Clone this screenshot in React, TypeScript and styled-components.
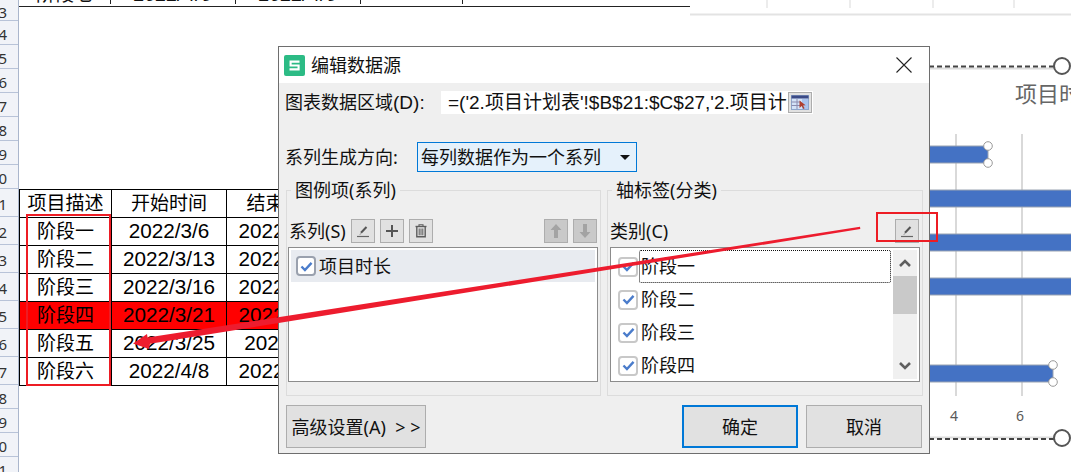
import React from "react";
import styled, { createGlobalStyle } from "styled-components";

const Global = createGlobalStyle`
  html, body { margin: 0; padding: 0; background: #fff; }
  body { font-family: "Noto Sans", "Noto Sans CJK SC", sans-serif; color: #111; }
`;

const Page = styled.div`
  position: relative;
  width: 1071px;
  height: 472px;
  overflow: hidden;
  display: flex;
  background: #fff;
`;

const RowHeaders = styled.div`
  flex: 0 0 19px;
  width: 19px;
  min-width: 0;
  overflow: hidden;
  box-sizing: border-box;
  background: #f1f3f8;
  border-right: 1px solid #aab6cc;
  display: flex;
  flex-direction: column;
`;

const RowHead = styled.div<{ $h: number }>`
  flex: 0 0 ${(p) => p.$h}px;
  box-sizing: border-box;
  border-bottom: 1px solid #b8c3d8;
  overflow: hidden;
  white-space: nowrap;
  text-indent: -10px;
  line-height: ${(p) => p.$h + 3}px;
  font-size: 15px;
  color: #333;
`;

const Sheet = styled.div`
  flex: 1;
  min-width: 0;
  display: flex;
  flex-direction: column;
`;

const TopRow = styled.div`
  display: flex;
  width: 671px;
  height: 7px;
  box-sizing: border-box;
  border-bottom: 1px solid #222;
  overflow: hidden;
`;

const TopCell = styled.div<{ $w: number }>`
  flex: 0 0 ${(p) => p.$w}px;
  box-sizing: border-box;
  height: 6px;
  border-right: 1px solid #222;
  display: flex;
  justify-content: center;
  align-items: flex-end;
  font-size: 19px;
  line-height: 20px;
  margin-top: -2px;
`;

const Table = styled.table`
  margin-top: 182px;
  border-collapse: collapse;
  table-layout: fixed;
  width: 323px;
  font-family: "Noto Sans CJK SC", sans-serif;
  font-size: 19px;
  color: #000;
`;

const Tr = styled.tr<{ $red?: boolean }>`
  height: 28px;
  background: ${(p) => (p.$red ? "#ff0000" : "#fff")};
`;

const Td = styled.td<{ $w?: number; $date?: boolean }>`
  ${(p) => (p.$w ? `width: ${p.$w}px;` : "")}
  ${(p) => (p.$date ? `font-family: "Liberation Sans", sans-serif; font-size: 20.7px;` : "")}
  box-sizing: border-box;
  border: 1px solid #000;
  padding: 0 0 ${(p) => (p.$date ? 1 : 3)}px;
  height: 28px;
  line-height: 24px;
  text-align: center;
  white-space: nowrap;
  overflow: hidden;
`;

const ChartSvg = styled.svg`
  position: absolute;
  left: 690px;
  top: 0;
`;

const Dialog = styled.div`
  position: absolute;
  left: 278px;
  top: 46px;
  width: 652px;
  height: 408px;
  box-sizing: border-box;
  border: 1px solid #6e6e6e;
  background: #efefef;
  font-size: 18px;
  line-height: 24px;
  color: #111;
  display: flex;
  flex-direction: column;
`;

const TitleBar = styled.div`
  flex: 0 0 36px;
  background: #fff;
  display: flex;
  align-items: center;
  padding: 0 17px 0 5px;
`;

const TitleText = styled.div`
  margin-left: 6px;
  flex: 1;
`;

const Body = styled.div`
  flex: 1;
  display: flex;
  flex-direction: column;
  padding: 7px 6px 0 7px;
`;

const FieldRow = styled.div<{ $top?: number }>`
  display: flex;
  align-items: center;
  margin-top: ${(p) => p.$top ?? 0}px;
  margin-left: -1px;
`;

const FieldLabel = styled.div<{ $w: number }>`
  flex: 0 0 ${(p) => p.$w}px;
  white-space: nowrap;
`;

const RangeInput = styled.div`
  width: 372px;
  height: 23px;
  background: #fff;
  display: flex;
  align-items: center;
`;

const RangeText = styled.div`
  width: 339px;
  padding-left: 7px;
  overflow: hidden;
  white-space: nowrap;
  font-size: 19px;
`;

const Latin = styled.span`
  font-family: "Liberation Sans", sans-serif;
  font-size: 19px;
`;

const RangeBtn = styled.div`
  width: 24px;
  height: 21px;
  margin-left: 1px;
  box-sizing: border-box;
  border: 1px solid #adadad;
  background: #e1e1e1;
  display: flex;
  align-items: center;
  justify-content: center;
`;

const Select = styled.div`
  width: 220px;
  height: 30px;
  box-sizing: border-box;
  border: 1px solid #0078d7;
  background: #e5f1fb;
  display: flex;
  align-items: center;
  justify-content: space-between;
  padding: 0 6px 0 3px;
`;

const Caret = styled.div`
  width: 0;
  height: 0;
  border-left: 5px solid transparent;
  border-right: 5px solid transparent;
  border-top: 5px solid #111;
`;

const Groups = styled.div`
  display: flex;
  gap: 6px;
  margin-top: 18px;
  height: 206px;
`;

const Group = styled.div<{ $w: number; $left: number }>`
  position: relative;
  box-sizing: border-box;
  width: ${(p) => p.$w}px;
  border: 1px solid #dcdcdc;
  padding: 28px 2px 0 ${(p) => p.$left}px;
`;

const Legend = styled.div`
  position: absolute;
  top: -13px;
  left: 4px;
  padding: 0 4px;
  background: #efefef;
`;

const Toolbar = styled.div<{ $pad: number }>`
  display: flex;
  align-items: center;
  gap: 5px;
  height: 24px;
  padding-left: ${(p) => p.$pad}px;
  padding-right: 1px;
`;

const ToolLabel = styled.div`
  flex: 0 0 56px;
  white-space: nowrap;
`;

const Spacer = styled.div`
  flex: 1;
`;

const ToolBtn = styled.div<{ $off?: boolean }>`
  flex: 0 0 24px;
  height: 24px;
  box-sizing: border-box;
  border: 1px solid #adadad;
  background: ${(p) => (p.$off ? "#c9c9c9" : "#e1e1e1")};
  display: flex;
  align-items: center;
  justify-content: center;
`;

const ListBox = styled.div`
  margin-top: 4px;
  width: 310px;
  height: 135px;
  box-sizing: border-box;
  border: 1px solid #8c8c8c;
  background: #fff;
  padding: 2px;
  display: flex;
  overflow: hidden;
`;

const Items = styled.div`
  flex: 1;
  min-width: 0;
`;

const Item = styled.div<{ $selected?: boolean }>`
  height: ${(p) => (p.$selected ? 32 : 33)}px;
  display: flex;
  align-items: center;
  padding-left: 5px;
  gap: 3px;
  background: ${(p) => (p.$selected ? "#e8ebf0" : "#fff")};
`;

const Box = styled.div<{ $dark?: boolean }>`
  flex: 0 0 20px;
  height: 20px;
  box-sizing: border-box;
  border: 2px solid ${(p) => (p.$dark ? "#9aa1ae" : "#c8c8c8")};
  border-radius: 4px;
  background: #fff;
  display: flex;
  align-items: center;
  justify-content: center;
`;

const ItemLabel = styled.div<{ $focus?: boolean }>`
  flex: 1;
  height: 33px;
  box-sizing: border-box;
  margin-left: -2px;
  padding-left: 1px;
  margin-right: 2px;
  line-height: 31px;
  border: 1px ${(p) => (p.$focus ? "dotted #111" : "solid transparent")};
  border-radius: 2px;
`;

const Scroll = styled.div`
  flex: 0 0 24px;
  background: #f0f0f0;
  display: flex;
  flex-direction: column;
  align-items: center;
`;

const ScrollEnd = styled.div`
  flex: 0 0 26px;
  width: 100%;
  display: flex;
  align-items: center;
  justify-content: center;
`;

const Thumb = styled.div`
  flex: 0 0 38px;
  width: 100%;
  background: #c9c9c9;
`;

const ScrollGap = styled.div`
  flex: 1;
`;

const Footer = styled.div`
  display: flex;
  align-items: center;
  margin: 9px 1px 0 0;
  gap: 8px;
`;

const Action = styled.div<{ $w: number; $primary?: boolean }>`
  width: ${(p) => p.$w}px;
  height: 43px;
  box-sizing: border-box;
  border: ${(p) => (p.$primary ? "2px solid #0078d7" : "1px solid #adadad")};
  background: #e1e1e1;
  display: flex;
  align-items: center;
  justify-content: center;
  white-space: pre;
`;

const Mark = styled.div<{ $x: number; $y: number; $w: number; $h: number }>`
  position: absolute;
  left: ${(p) => p.$x}px;
  top: ${(p) => p.$y}px;
  width: ${(p) => p.$w}px;
  height: ${(p) => p.$h}px;
  box-sizing: border-box;
  border: 2px solid #ed1c24;
`;

const ArrowSvg = styled.svg`
  position: absolute;
  left: 0;
  top: 0;
  pointer-events: none;
`;

const Pencil = () => (
  <svg width="18" height="18" viewBox="0 0 18 18">
    <path d="M7 10.8 L12.5 5" stroke="#555" strokeWidth="2" fill="none" />
    <path d="M6.4 11.4 L5.2 12.8 L7.2 12Z" fill="#555" />
    <path d="M3 14.5 H15" stroke="#666" strokeWidth="1.2" />
  </svg>
);

const Plus = () => (
  <svg width="16" height="16" viewBox="0 0 16 16">
    <path d="M8 2 V14 M2 8 H14" stroke="#555" strokeWidth="2" />
  </svg>
);

const Trash = () => (
  <svg width="16" height="16" viewBox="0 0 16 16" fill="none" stroke="#5c5c5c">
    <path d="M2.5 3.5 H13.5" strokeWidth="1.4" />
    <path d="M6 3 V1.7 H10 V3" strokeWidth="1.1" />
    <path d="M3.8 4 V13.8 H12.2 V4" strokeWidth="1.4" />
    <path d="M6.2 5.5 V12.3 M8 5.5 V12.3 M9.8 5.5 V12.3" strokeWidth="1" />
  </svg>
);

const Vert = ({ down }: { down?: boolean }) => (
  <svg width="14" height="16" viewBox="0 0 14 16" fill="#a3a3a3" style={down ? { transform: "rotate(180deg)" } : undefined}>
    <path d="M7 1 L12.5 7 H9 V15 H5 V7 H1.5Z" />
  </svg>
);

const Chev = ({ down }: { down?: boolean }) => (
  <svg width="14" height="10" viewBox="0 0 14 10" style={down ? { transform: "rotate(180deg)" } : undefined}>
    <path d="M2 8 L7 3 L12 8" fill="none" stroke="#5f5f5f" strokeWidth="2.6" />
  </svg>
);

const Check = () => (
  <svg width="13" height="11" viewBox="0 0 14 12">
    <path d="M1.5 6 L5.3 9.8 L12.5 2" fill="none" stroke="#4a7ccb" strokeWidth="2.6" />
  </svg>
);

const CloseX = () => (
  <svg width="16" height="16" viewBox="0 0 16 16">
    <path d="M0.5 0.5 L15.5 15.5 M15.5 0.5 L0.5 15.5" stroke="#222" strokeWidth="1.1" />
  </svg>
);

const SLogo = () => (
  <svg width="21" height="21" viewBox="0 0 21 21">
    <rect width="21" height="21" rx="2" fill="#2cbb85" />
    <path d="M15.5 6.6 H6.6 V10.5 H14.6 V14.4 H5.5" fill="none" stroke="#fff" strokeWidth="2.1" />
  </svg>
);

const RangeIcon = () => (
  <svg width="18" height="15" viewBox="0 0 18 15">
    <rect x="0.5" y="0.5" width="17" height="14" fill="#d4e3f8" stroke="#8ea6cc" />
    <rect x="0.5" y="0.5" width="17" height="3" fill="#3b4a86" />
    <path d="M0.5 7 H10 M0.5 10.5 H10 M6 4 V14" stroke="#8c8cb0" />
    <rect x="11" y="4" width="6" height="10" fill="#a9c4ee" />
    <path d="M8.5 5.5 L8.5 13 L10.7 11 L12.3 14 L13.6 13.3 L12 10.5 L14.6 10.2Z" fill="#b0402f" />
  </svg>
);

const rowHeights = [21, 24, 24, 24, 24, 24, 24, 24, 28, 28, 28, 28, 28, 28, 28, 24, 24, 24, 24];
const rows: [string, string, string, boolean?][] = [
  ["阶段一", "2022/3/6", "2022/3/12"],
  ["阶段二", "2022/3/13", "2022/3/15"],
  ["阶段三", "2022/3/16", "2022/3/20"],
  ["阶段四", "2022/3/21", "2022/3/24", true],
  ["阶段五", "2022/3/25", "2022/4/7"],
  ["阶段六", "2022/4/8", "2022/4/15"],
];

const Bar = ({ y, x2 }: { y: number; x2: number }) => (
  <rect x={900} y={y} width={x2 - 900} height={17} fill="#4472c4" stroke="#9aa3b2" strokeWidth="1" />
);

const Handle = ({ x, y }: { x: number; y: number }) => (
  <circle cx={x} cy={y} r={4.3} fill="#fff" stroke="#9a9a9a" strokeWidth="1" />
);

export default function App() {
  return (
    <Page>
      <Global />
      <RowHeaders>
        {rowHeights.map((h, i) => (
          <RowHead key={i} $h={h}>{13 + i}</RowHead>
        ))}
      </RowHeaders>
      <Sheet>
        <TopRow>
          <TopCell $w={92}>阶段七</TopCell>
          <TopCell $w={125}>2022/4/9</TopCell>
          <TopCell $w={125}>2022/4/9</TopCell>
          <TopCell $w={102} />
          <TopCell $w={228} />
        </TopRow>
        <Table>
          <tbody>
            <Tr>
              <Td $w={92}>项目描述</Td>
              <Td $w={115}>开始时间</Td>
              <Td $w={116}>结束时间</Td>
            </Tr>
            {rows.map(([a, b, c, red]) => (
              <Tr key={a} $red={red}>
                <Td>{a}</Td>
                <Td $date>{b}</Td>
                <Td $date>{c}</Td>
              </Tr>
            ))}
          </tbody>
        </Table>
      </Sheet>

      <ChartSvg width="381" height="472" viewBox="690 0 381 472">
        <path d="M690 14.5 H1071" stroke="#e3e3e3" strokeWidth="2" />
        <path d="M767 0 V8 M850 0 V8 M933 0 V8 M1014 0 V8" stroke="#e6e6e6" strokeWidth="1.5" />
        <path d="M929 68.5 H1054" stroke="#dcdcdc" strokeWidth="2" />
        <path d="M929 66.5 H1054" stroke="#444" strokeWidth="2" strokeDasharray="5 3" />
        <circle cx="1062" cy="66" r="8" fill="#fff" stroke="#555" strokeWidth="2" />
        <text x="1015" y="102" fontSize="22" fill="#666" fontFamily="'Noto Sans CJK SC', sans-serif">项目时长</text>
        <path d="M956 134 V396 M1022 134 V396" stroke="#d9d9d9" strokeWidth="2" />
        <Bar y={146} x2={988} />
        <Bar y={190} x2={1080} />
        <Bar y={234} x2={1080} />
        <Bar y={278} x2={1080} />
        <Bar y={365} x2={1053} />
        <Handle x={988} y={146} />
        <Handle x={988} y={163} />
        <Handle x={1053} y={365} />
        <Handle x={1053} y={382} />
        <text x="954" y="421" fontSize="14" fill="#595959" textAnchor="middle" fontFamily="'Noto Sans', sans-serif">4</text>
        <text x="1020" y="421" fontSize="14" fill="#595959" textAnchor="middle" fontFamily="'Noto Sans', sans-serif">6</text>
        <path d="M929 437.5 H1054" stroke="#dcdcdc" strokeWidth="2" />
        <path d="M929 439 H1054" stroke="#444" strokeWidth="2" strokeDasharray="5 3" />
        <circle cx="1062" cy="438" r="8" fill="#fff" stroke="#555" strokeWidth="2" />
      </ChartSvg>

      <Dialog>
        <TitleBar>
          <SLogo />
          <TitleText>编辑数据源</TitleText>
          <CloseX />
        </TitleBar>
        <Body>
          <FieldRow>
            <FieldLabel $w={156}>图表数据区域<Latin>(D):</Latin></FieldLabel>
            <RangeInput>
              <RangeText>
                <Latin>=('2.</Latin>项目计划表<Latin>'!$B$21:$C$27,'2.</Latin>项目计划表
              </RangeText>
              <RangeBtn><RangeIcon /></RangeBtn>
            </RangeInput>
          </FieldRow>
          <FieldRow $top={27}>
            <FieldLabel $w={132}>系列生成方向:</FieldLabel>
            <Select>
              每列数据作为一个系列
              <Caret />
            </Select>
          </FieldRow>
          <Groups>
            <Group $w={315} $left={1}>
              <Legend>图例项(系列)</Legend>
              <Toolbar $pad={1}>
                <ToolLabel>系列(S)</ToolLabel>
                <ToolBtn><Pencil /></ToolBtn>
                <ToolBtn><Plus /></ToolBtn>
                <ToolBtn><Trash /></ToolBtn>
                <Spacer />
                <ToolBtn $off><Vert /></ToolBtn>
                <ToolBtn $off><Vert down /></ToolBtn>
              </Toolbar>
              <ListBox>
                <Items>
                  <Item $selected>
                    <Box $dark><Check /></Box>
                    项目时长
                  </Item>
                </Items>
              </ListBox>
            </Group>
            <Group $w={316} $left={2}>
              <Legend>轴标签(分类)</Legend>
              <Toolbar $pad={0}>
                <ToolLabel>类别(C)</ToolLabel>
                <Spacer />
                <ToolBtn><Pencil /></ToolBtn>
              </Toolbar>
              <ListBox>
                <Items>
                  {["阶段一", "阶段二", "阶段三", "阶段四"].map((t, i) => (
                    <Item key={t}>
                      <Box><Check /></Box>
                      <ItemLabel $focus={i === 0}>{t}</ItemLabel>
                    </Item>
                  ))}
                </Items>
                <Scroll>
                  <ScrollEnd><Chev /></ScrollEnd>
                  <Thumb />
                  <ScrollGap />
                  <ScrollEnd><Chev down /></ScrollEnd>
                </Scroll>
              </ListBox>
            </Group>
          </Groups>
          <Footer>
            <Action $w={140}>高级设置(A)  &gt; &gt;</Action>
            <Spacer />
            <Action $w={116} $primary>确定</Action>
            <Action $w={116}>取消</Action>
          </Footer>
        </Body>
      </Dialog>

      <Mark $x={26} $y={214} $w={85} $h={172} />
      <Mark $x={876} $y={212} $w={62} $h={30} />
      <ArrowSvg width="1071" height="472" viewBox="0 0 1071 472">
        <polygon
          points="860,226.8 860.3,229 150,343.8 149,349 133,343.5 147,334 147.6,337.6"
          fill="#ed1c2e"
        />
      </ArrowSvg>
    </Page>
  );
}
